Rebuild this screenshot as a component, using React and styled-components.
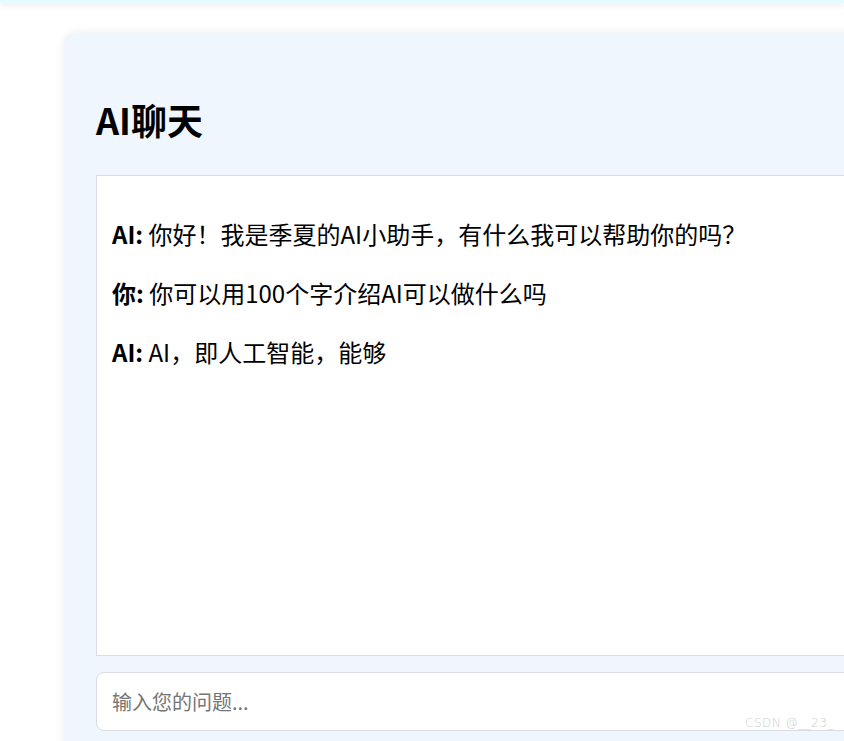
import styled, { createGlobalStyle } from 'styled-components';

const GlobalStyle = createGlobalStyle`
  html, body {
    margin: 0;
    padding: 0;
    background: #fff;
    overflow: hidden;
  }
  body {
    font-family: "Noto Sans CJK SC", "Noto Sans", sans-serif;
    color: #000;
  }
`;

const Screen = styled.div`
  position: relative;
  width: 100vw;
  height: 100vh;
  overflow: hidden;
`;

const TopBar = styled.div`
  height: 3px;
  background: #e6fbfb;
  box-shadow: 0 2px 6px rgba(0, 0, 0, 0.12);
`;

const Page = styled.div`
  padding: 30px 0 0 64px;
`;

const Card = styled.div`
  width: 1000px;
  height: 760px;
  box-sizing: border-box;
  background: #eff6fe;
  border-radius: 12px;
  box-shadow: 0 0 10px rgba(0, 0, 0, 0.08);
  padding: 30px 32px;
`;

const Title = styled.h2`
  font-size: 36px;
  font-weight: 700;
  margin: 30px 0;
`;

const ChatBox = styled.div`
  height: 481px;
  box-sizing: border-box;
  background: #fff;
  border: 1px solid #d9dde2;
  padding: 16px 15px;
  overflow: hidden;
`;

const Message = styled.p`
  font-size: 24px;
  margin: 24px 0;
`;

const Sender = styled.strong`
  font-weight: 700;
`;

const Input = styled.input`
  display: block;
  width: 100%;
  height: 59px;
  box-sizing: border-box;
  margin-top: 16px;
  padding: 0 15px;
  border: 1px solid #d9dde2;
  border-radius: 8px;
  background: #fff;
  font-family: "Noto Sans CJK SC", "Noto Sans", sans-serif;
  font-size: 20px;
  outline: none;

  &::placeholder {
    color: #757575;
  }
`;

const Watermark = styled.div`
  position: absolute;
  left: 745px;
  top: 716px;
  font-family: "DejaVu Sans", sans-serif;
  font-weight: 300;
  font-size: 12px;
  color: #cfcfcf;
  letter-spacing: 0.5px;
`;

const messages = [
  { from: 'AI', text: '你好！我是季夏的AI小助手，有什么我可以帮助你的吗？' },
  { from: '你', text: '你可以用100个字介绍AI可以做什么吗' },
  { from: 'AI', text: 'AI，即人工智能，能够' },
];

export default function App() {
  return (
    <Screen>
      <GlobalStyle />
      <TopBar />
      <Page>
        <Card>
          <Title>AI聊天</Title>
          <ChatBox>
            {messages.map((m, i) => (
              <Message key={i}>
                <Sender>{m.from}:</Sender> {m.text}
              </Message>
            ))}
          </ChatBox>
          <Input placeholder="输入您的问题..." />
        </Card>
      </Page>
      <Watermark>CSDN @__23_</Watermark>
    </Screen>
  );
}
